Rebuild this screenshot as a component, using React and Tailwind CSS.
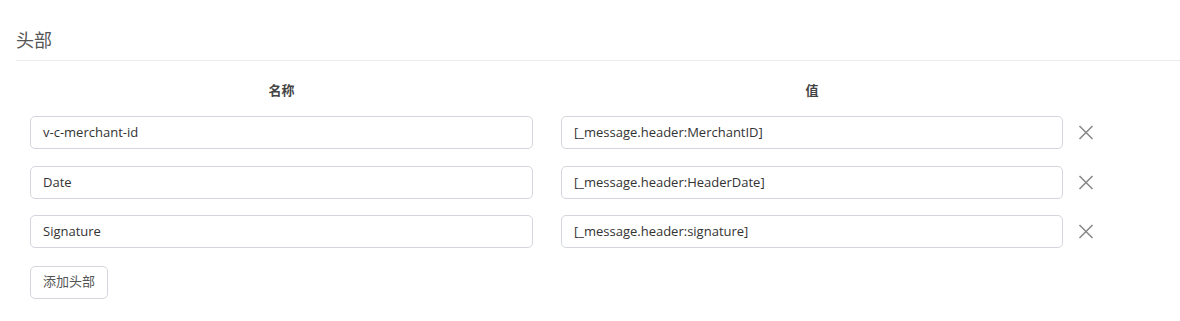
import React from "react";

const rows = [
  ["v-c-merchant-id", "[_message.header:MerchantID]"],
  ["Date", "[_message.header:HeaderDate]"],
  ["Signature", "[_message.header:signature]"],
];

function XIcon() {
  return (
    <svg width="16" height="15" viewBox="0 0 16 15" className="block">
      <path d="M1.5 1 L14.5 14 M14.5 1 L1.5 14" stroke="#8a8a8a" strokeWidth="1.6" fill="none" />
    </svg>
  );
}

export default function App() {
  return (
    <div
      className="w-[1180px] h-[321px] bg-white pl-4 text-[#333]"
      style={{ fontFamily: '"Open Sans", "Noto Sans CJK SC", sans-serif' }}
    >
      <div className="pt-[26px] pb-[6px] border-b border-[#ebebeb] text-[18px] leading-[28px] text-[#555]">
        头部
      </div>
      <div className="grid grid-cols-[531px_530px_1fr] pr-4">
        <div className="pt-[20px] pb-[9px] text-center text-[13px] leading-[18px] font-bold text-[#444]">名称</div>
        <div className="pt-[20px] pb-[9px] text-center text-[13px] leading-[18px] font-bold text-[#444]">值</div>
        <div></div>
        {rows.map(([k, v], i) => (
          <React.Fragment key={i}>
            <div className="px-[14px] py-[8.25px]">
              <div className="h-[33px] border border-[#d3d6dc] rounded-[5px] pl-[12px] flex items-center text-[13px] text-[#333]">
                {k}
              </div>
            </div>
            <div className="px-[14px] py-[8.25px]">
              <div className="h-[33px] border border-[#d3d6dc] rounded-[5px] pl-[12px] flex items-center text-[13px] text-[#333]">
                {v}
              </div>
            </div>
            <div className="flex items-center pl-[1px]">
              <XIcon />
            </div>
          </React.Fragment>
        ))}
      </div>
      <div className="pl-[14px] pt-[9px]">
        <button className="h-[33px] px-[12px] border border-[#d3d6dc] rounded-[5px] text-[13px] text-[#555] bg-white">
          添加头部
        </button>
      </div>
    </div>
  );
}
